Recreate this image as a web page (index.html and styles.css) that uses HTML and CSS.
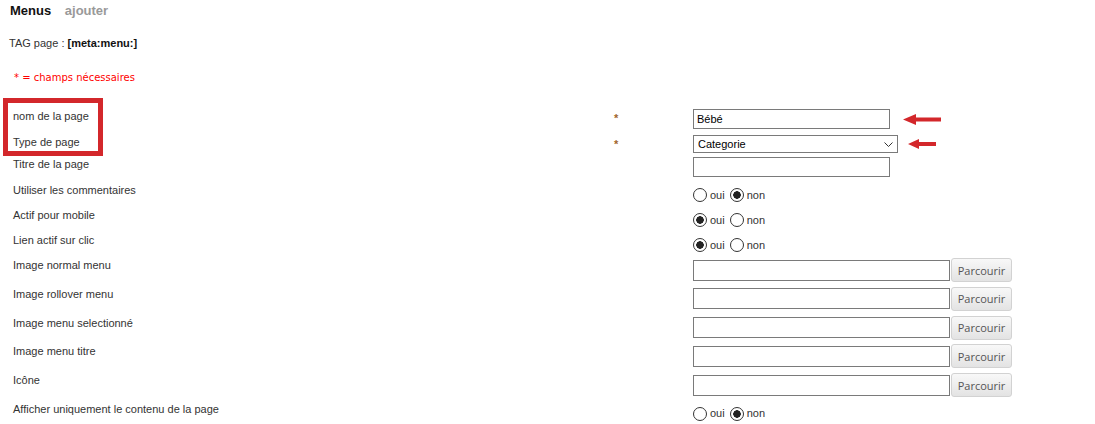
FILE: index.html
```html
<!DOCTYPE html>
<html lang="fr">
<head>
  <meta charset="UTF-8" />
  <title>Menus</title>
  <link rel="stylesheet" href="styles.css">
</head>
<body>
  <header class="tabs">
    <span class="tab-active">Menus</span>
    <span class="tab">ajouter</span>
  </header>

  <p class="tag">TAG page : <b>[meta:menu:]</b></p>
  <p class="required">* = champs nécessaires</p>

  <form class="menu-form">
    <div class="row row-text">
      <label class="name">nom de la page</label>
      <span class="req">*</span>
      <div><input class="text" type="text" value="Bébé"></div>
    </div>
    <div class="row row-select">
      <label class="name">Type de page</label>
      <span class="req">*</span>
      <div class="select">
        <select>
          <option>Categorie</option>
          <option>Produit</option>
          <option>Contenu</option>
        </select>
        <svg class="chevron" width="9" height="5" viewBox="0 0 9 5"><path d="M0.5 0.5 L4.5 4.5 L8.5 0.5" fill="none" stroke="#333" stroke-width="1"/></svg>
      </div>
    </div>
    <div class="row row-text">
      <label class="name">Titre de la page</label>
      <span class="req"></span>
      <div><input class="text" type="text"></div>
    </div>
    <div class="row">
      <label class="name">Utiliser les commentaires</label>
      <span class="req"></span>
      <div class="choices">
        <label class="choice"><input type="radio" name="comments">oui</label>
        <label class="choice"><input type="radio" name="comments" checked>non</label>
      </div>
    </div>
    <div class="row">
      <label class="name">Actif pour mobile</label>
      <span class="req"></span>
      <div class="choices">
        <label class="choice"><input type="radio" name="mobile" checked>oui</label>
        <label class="choice"><input type="radio" name="mobile">non</label>
      </div>
    </div>
    <div class="row">
      <label class="name">Lien actif sur clic</label>
      <span class="req"></span>
      <div class="choices">
        <label class="choice"><input type="radio" name="click" checked>oui</label>
        <label class="choice"><input type="radio" name="click">non</label>
      </div>
    </div>
    <div class="row row-file">
      <label class="name">Image normal menu</label>
      <span class="req"></span>
      <div class="file"><input class="path" type="text"><button type="button" class="browse">Parcourir</button></div>
    </div>
    <div class="row row-file">
      <label class="name">Image rollover menu</label>
      <span class="req"></span>
      <div class="file"><input class="path" type="text"><button type="button" class="browse">Parcourir</button></div>
    </div>
    <div class="row row-file">
      <label class="name">Image menu selectionné</label>
      <span class="req"></span>
      <div class="file"><input class="path" type="text"><button type="button" class="browse">Parcourir</button></div>
    </div>
    <div class="row row-file">
      <label class="name">Image menu titre</label>
      <span class="req"></span>
      <div class="file"><input class="path" type="text"><button type="button" class="browse">Parcourir</button></div>
    </div>
    <div class="row row-file">
      <label class="name">Icône</label>
      <span class="req"></span>
      <div class="file"><input class="path" type="text"><button type="button" class="browse">Parcourir</button></div>
    </div>
    <div class="row">
      <label class="name">Afficher uniquement le contenu de la page</label>
      <span class="req"></span>
      <div class="choices">
        <label class="choice"><input type="radio" name="only">oui</label>
        <label class="choice"><input type="radio" name="only" checked>non</label>
      </div>
    </div>
  </form>

  <!-- annotations -->
  <div class="highlight"></div>
  <svg class="arrow arrow-one" width="38" height="11" viewBox="0 0 38 11"><polygon points="0,5.5 13,0 13,3.5 38,3.5 38,7.5 13,7.5 13,11" fill="#d3272b"/></svg>
  <svg class="arrow arrow-two" width="28" height="10" viewBox="0 0 28 10"><polygon points="0,5 11,0 11,3 28,3 28,7 11,7 11,10" fill="#d3272b"/></svg>
</body>
</html>
```

FILE: styles.css
```css
/* Base */
body {
  margin: 0;
  position: relative;
  font-family: "Liberation Sans", Arial, sans-serif;
  font-size: 11px;
  color: #333;
  background: #fff;
}
p {
  margin: 0;
}

/* Tabs */
.tabs {
  padding: 3px 0 0 10px;
  font-size: 13px;
  font-weight: bold;
  line-height: 16px;
}
.tab-active {
  color: #111;
  margin-right: 10px;
}
.tab {
  color: #999;
}

.tag {
  margin: 17px 0 0 9px;
  line-height: 14px;
}
.tag b {
  color: #111;
}

.required {
  margin: 21px 0 0 14px;
  font-family: "DejaVu Sans", sans-serif;
  font-size: 10px;
  line-height: 13px;
  color: #f00;
}

/* Form rows */
.menu-form {
  margin-top: 25px;
  padding-left: 13px;
}
.row {
  display: grid;
  grid-template-columns: 601px 78px 1fr;
  align-items: start;
  height: 25px;
}
.row-text {
  height: 26px;
}
.row-select {
  height: 22px;
}
.row-file {
  height: 28.75px;
}
.name {
  line-height: 14px;
  color: #333;
}
.req {
  padding-top: 2px;
  line-height: 14px;
  font-weight: bold;
  color: #a0642a;
}

/* Fields */
.text,
.path {
  box-sizing: border-box;
  height: 20px;
  margin: 0 0 0 1px;
  padding: 0 3px;
  border: 1px solid #7a7a7a;
  font: 11px "Liberation Sans", Arial, sans-serif;
  color: #000;
  outline: none;
}
.text {
  width: 197px;
}

.select {
  position: relative;
  width: 205px;
  height: 18px;
  margin-left: 1px;
}
.select select {
  appearance: none;
  box-sizing: border-box;
  width: 100%;
  height: 100%;
  margin: 0;
  padding: 0 0 0 4px;
  border: 1px solid #7a7a7a;
  border-radius: 0;
  background: #fff;
  font: 11px "Liberation Sans", Arial, sans-serif;
  color: #000;
}
.chevron {
  position: absolute;
  right: 5px;
  top: 7px;
  pointer-events: none;
}

/* Radios */
.choices {
  display: flex;
  align-items: center;
  padding-top: 5px;
}
.choice {
  display: flex;
  align-items: center;
  margin-right: 4px;
  line-height: 13px;
  color: #333;
}
.choice input {
  appearance: none;
  box-sizing: border-box;
  width: 14px;
  height: 14px;
  margin: 0 3px 0 1px;
  border: 1px solid #333;
  border-radius: 50%;
  background: #fff;
}
.choice input:checked {
  background: radial-gradient(circle, #222 0 3.5px, #fff 4px);
}

/* File pickers */
.file {
  display: flex;
  align-items: center;
}
.path {
  width: 257px;
  height: 21px;
}
.browse {
  box-sizing: border-box;
  width: 61px;
  height: 24px;
  margin-left: 1px;
  padding: 0;
  border: 1px solid #d2d2d2;
  border-radius: 3px;
  background: linear-gradient(#f8f8f8, #e3e3e3);
  font: 11px "Open Sans", sans-serif;
  color: #555;
}

/* Annotation overlays */
.highlight {
  position: absolute;
  left: 3px;
  top: 98px;
  width: 100px;
  height: 58px;
  box-sizing: border-box;
  border: 5px solid #d3272b;
}
.arrow {
  position: absolute;
}
.arrow-one {
  left: 903px;
  top: 114px;
}
.arrow-two {
  left: 908px;
  top: 139px;
}
```
